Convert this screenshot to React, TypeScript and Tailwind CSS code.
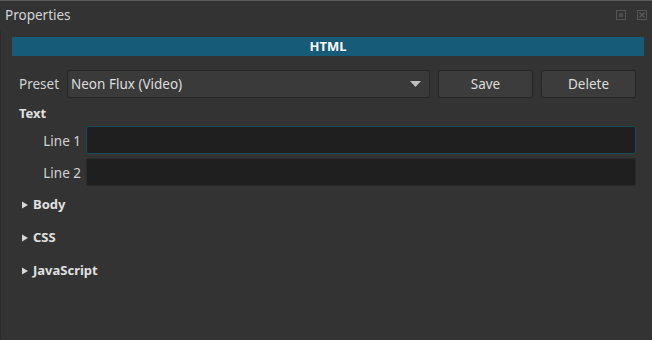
import React from 'react';

const font = { fontFamily: '"Noto Sans", "Open Sans", sans-serif' };

const Section = ({ label }: { label: string }) => (
  <div className="flex items-center h-[20px] pl-[20px] gap-[4px] text-[13px] font-bold text-[#e0e0e0]">
    <svg width="8" height="8" viewBox="0 0 8 8"><path d="M1 0.5 L7 4 L1 7.5 Z" fill="#d8d8d8" /></svg>
    <span>{label}</span>
  </div>
);

export default function App() {
  return (
    <div className="w-[652px] h-[340px] bg-[#333333] border-t border-[#5c5c5c] text-[#dcdcdc] flex flex-col overflow-hidden" style={font}>
      <div className="flex items-center justify-between h-[30px] pl-[5px] pr-[5px] shrink-0">
        <span className="text-[13.5px] text-[#d4d4d4] -mt-[1px]">Properties</span>
        <div className="flex items-center gap-[11px] -mt-[3px]">
          <svg width="10" height="10" viewBox="0 0 10 10">
            <rect x="0.5" y="0.5" width="9" height="9" fill="none" stroke="#555" />
            <rect x="3" y="3" width="4" height="4" fill="#4a4a4a" />
          </svg>
          <svg width="10" height="10" viewBox="0 0 10 10">
            <rect x="0.5" y="0.5" width="9" height="9" fill="none" stroke="#555" />
            <path d="M2.5 2.5 L7.5 7.5 M7.5 2.5 L2.5 7.5" stroke="#5a5a5a" strokeWidth="1.2" />
          </svg>
        </div>
      </div>
      <div className="flex-1 border-l border-[#2a2a2a] pl-[11px] pr-[8px]">
        <div className="mt-[6px] h-[19px] bg-[#165b77] flex items-center justify-center text-[13px] font-bold text-white">HTML</div>
        <div className="flex items-center mt-[14px] h-[28px]">
          <span className="w-[55px] pl-[7px] text-[13.5px] text-[#d4d4d4]">Preset</span>
          <div className="w-[363px] h-[28px] bg-[#3a3a3a] border border-[#262626] rounded-[3px] flex items-center justify-between pl-[3px] pr-[8px]">
            <span className="text-[13.5px] text-[#dedede]">Neon Flux (Video)</span>
            <svg width="11" height="6" viewBox="0 0 11 6"><path d="M0 0 L11 0 L5.5 6 Z" fill="#bdbdbd" /></svg>
          </div>
          <button className="ml-[8px] w-[95px] h-[28px] bg-[#3c3c3c] border border-[#262626] rounded-[3px] text-[13.5px] text-[#dedede]">Save</button>
          <button className="ml-[8px] w-[95px] h-[28px] bg-[#3c3c3c] border border-[#262626] rounded-[3px] text-[13.5px] text-[#dedede]">Delete</button>
        </div>
        <div className="mt-[6px] pl-[7px] h-[20px] flex items-center text-[13px] font-bold text-[#e0e0e0]">Text</div>
        <div className="flex items-center mt-[2px] h-[28px]">
          <span className="w-[69px] pt-[3px] text-right text-[13.5px] text-[#d4d4d4]">Line 1</span>
          <div className="ml-[5px] w-[550px] h-[28px] bg-[#1f1f1f] border border-[#1d4a5b] rounded-[2px]" />
        </div>
        <div className="flex items-center mt-[4px] h-[28px]">
          <span className="w-[69px] pt-[3px] text-right text-[13.5px] text-[#d4d4d4]">Line 2</span>
          <div className="ml-[5px] w-[550px] h-[28px] bg-[#1f1f1f] border border-[#2a2a2a] rounded-[2px]" />
        </div>
        <div className="mt-[9px] flex flex-col gap-[13px] -ml-[11px]">
          <Section label="Body" />
          <Section label="CSS" />
          <Section label="JavaScript" />
        </div>
      </div>
    </div>
  );
}
